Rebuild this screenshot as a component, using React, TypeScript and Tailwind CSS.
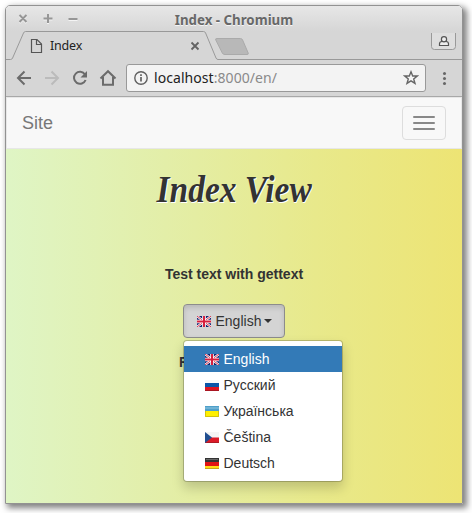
import React from "react";

type Code = "en" | "ru" | "uk" | "cs" | "de";

function Flag({ code }: { code: Code }) {
  return (
    <svg width="14" height="11" viewBox="0 0 14 11" className="block shrink-0">
      {code === "en" && (
        <>
          <rect width="14" height="11" fill="#16246f" />
          <path d="M0 0L14 11M14 0L0 11" stroke="#fff" strokeWidth="2.200" />
          <path d="M0 0L14 11M14 0L0 11" stroke="#d8304a" strokeWidth="1" />
          <path d="M7 0V11M0 5.5H14" stroke="#fff" strokeWidth="3.600" />
          <path d="M7 0V11M0 5.5H14" stroke="#d71f3d" strokeWidth="2" />
        </>
      )}
      {code === "ru" && (
        <>
          <rect width="14" height="11" fill="#f9f9f9" />
          <rect y="3" width="14" height="4" fill="#0b55a8" />
          <rect y="7" width="14" height="4" fill="#dd1420" />
          <path d="M0 10.5H14" stroke="#a91622" />
        </>
      )}
      {code === "uk" && (
        <>
          <rect width="14" height="11" fill="#fff000" />
          <rect width="14" height="5" fill="#4f9fc9" />
          <rect y="1" width="14" height="2" fill="#70b3d5" />
          <path d="M.5 5V10.5H13.5V5" stroke="#d3c20d" fill="none" />
        </>
      )}
      {code === "cs" && (
        <>
          <rect width="14" height="11" fill="#f5f5f5" />
          <rect y="5.5" width="14" height="5.5" fill="#dc1b28" />
          <path d="M0 10.5H14" stroke="#ae1b24" />
          <path d="M0 0L7 5.5L0 11Z" fill="#224f91" />
        </>
      )}
      {code === "de" && (
        <>
          <rect width="14" height="11" fill="#ffdb16" />
          <rect width="14" height="4" fill="#333" />
          <path d="M1 1.5H13" stroke="#666" />
          <rect y="4" width="14" height="4" fill="#e01414" />
          <path d="M0 10.5H14" stroke="#c8a816" />
        </>
      )}
    </svg>
  );
}

const languages: { code: Code; name: string }[] = [
  { code: "en", name: "English" },
  { code: "ru", name: "Русский" },
  { code: "uk", name: "Українська" },
  { code: "cs", name: "Čeština" },
  { code: "de", name: "Deutsch" },
];

function TitleBar() {
  return (
    <div className="relative flex h-[25px] items-center justify-center bg-linear-to-b from-[#e7e7e7] to-[#d6d6d6]">
      <svg width="64" height="12" viewBox="0 0 64 12" className="absolute left-[12px] top-[7px]" fill="none" strokeWidth="2">
        <g stroke="#f4f4f4" transform="translate(0 1)">
          <path d="M1.5 2L8.5 9M8.5 2L1.5 9M25.5 5.5H34.5M30 1V10M50.5 6H59.5" />
        </g>
        <path stroke="#969696" d="M1.5 2L8.5 9M8.5 2L1.5 9M25.5 5.5H34.5M30 1V10M50.5 6H59.5" />
      </svg>
      <h1 className="pt-[3px] font-['Noto_Sans',sans-serif] text-[13.300px] leading-[20px] font-bold whitespace-nowrap text-[#686868] [text-shadow:0_1px_0_#f5f5f5]">
        Index - Chromium
      </h1>
    </div>
  );
}

function TabStrip() {
  return (
    <div className="relative h-[29px] bg-[#d6d6d6]">
      <svg width="456" height="29" viewBox="6 31 456 29" className="absolute left-0 top-0" fill="none">
        <path d="M6 59.5H10.5Q12 59.5 12.6 58L23.5 33Q24.2 31.5 25.5 31.5H203.5Q205 31.5 205.6 33L216 58Q216.700 59.5 218 59.5H462" stroke="#999" />
        <path d="M217 38.500H240.500Q242 38.500 242.600 40L248.200 53Q248.700 54.500 247 54.500H225Q223 54.500 222.300 53L215.800 40Q215 38.500 217 38.500Z" fill="#b8b8b8" stroke="#aaa" />
        <path d="M431.500 33V46.500Q431.500 49.500 434.500 49.500H452.500Q455.500 49.500 455.500 46.500V33" stroke="#999" fill="#dedede" />
        <path d="M439.500 45.500V43.800Q439.500 41.500 442 41.500H446Q448.500 41.500 448.500 43.800V45.500Z" stroke="#555" strokeWidth="1.200" fill="#eee" />
        <circle cx="444" cy="39.200" r="2.600" stroke="#555" strokeWidth="1.200" fill="#eee" />
        <path d="M31.500 39.500H37L41.500 44V52.500H31.500ZM36.500 39.500V44.500H41.500" stroke="#555" strokeWidth="1.200" />
        <path d="M191.500 42.500L198.500 49.500M198.500 42.500L191.500 49.500" stroke="#636363" strokeWidth="1.800" />
      </svg>
      <span className="relative block pt-[5px] pl-[44px] font-['Noto_Sans',sans-serif] text-[12.500px] leading-[20px] tracking-[-0.200px] text-[#222]">Index</span>
    </div>
  );
}

function Toolbar() {
  return (
    <div className="flex h-[37px] items-center border-b border-[#a8a8a8] bg-[#d6d6d6]">
      <svg width="120" height="36" viewBox="6 60 120 36" className="shrink-0" fill="none" strokeWidth="2">
        <path d="M31 78H18M24.500 71.500L18 78L24.500 84.500" stroke="#6b6b6b" />
        <path d="M45 78H58M51.500 71.500L58 78L51.500 84.500" stroke="#bbb" />
        <path d="M85 74.500A6 6 0 1 0 85.600 80" stroke="#6b6b6b" />
        <path d="M87 71V77.500H80.500Z" fill="#6b6b6b" />
        <path d="M100.500 78.500L108 71.200L115.500 78.500M103 77V84.800H113V77" stroke="#6b6b6b" />
      </svg>
      <div className="flex h-[28px] w-[300px] shrink-0 items-center rounded-[3px] border border-[#999] bg-[#f3f3f3]">
        <svg width="14" height="14" viewBox="0 0 14 14" className="ml-[7px]" fill="none" stroke="#606060">
          <circle cx="7" cy="7" r="6.200" strokeWidth="1.400" />
          <path d="M7 6V10.500M7 3.300V5" strokeWidth="1.700" />
        </svg>
        <span className="ml-[6px] font-['Noto_Sans',sans-serif] text-[14px] leading-[20px] tracking-[0.060px] whitespace-nowrap text-[#8a8a8a]">
          <span className="text-[#222]">localhost</span>:8000/en/
        </span>
        <svg width="16" height="16" viewBox="0 0 16 16" className="mr-[6px] ml-auto" fill="none" stroke="#666" strokeWidth="1.400">
          <path d="M8 1.800L9.700 6H14.200L10.700 8.900L12 13.400L8 10.800L4 13.400L5.300 8.900L1.800 6H6.300Z" />
        </svg>
      </div>
      <svg width="5" height="16" viewBox="0 0 5 16" className="ml-[16px]" fill="#666">
        <circle cx="2.500" cy="3.500" r="1.500" />
        <circle cx="2.500" cy="8.500" r="1.500" />
        <circle cx="2.500" cy="13.500" r="1.500" />
      </svg>
    </div>
  );
}

function Navbar() {
  return (
    <nav className="flex h-[52px] items-center justify-between border border-[#e7e7e7] bg-[#f8f8f8] pr-[15px] pl-[15px]">
      <span className="text-[18px] leading-[20px] text-[#777]">Site</span>
      <button className="flex h-[34px] w-[44px] flex-col items-center justify-center gap-[4px] rounded-[4px] border border-[#ddd]">
        <span className="h-[2px] w-[22px] rounded-[1px] bg-[#888]" />
        <span className="h-[2px] w-[22px] rounded-[1px] bg-[#888]" />
        <span className="h-[2px] w-[22px] rounded-[1px] bg-[#888]" />
      </button>
    </nav>
  );
}

export default function App() {
  return (
    <div className="h-[513px] w-[472px] overflow-hidden bg-white pt-[5px] pl-[5px] font-['Liberation_Sans',Arial,sans-serif] text-[14px] leading-[20px] text-[#333]">
      <div className="h-[499px] w-[458px] overflow-hidden rounded-t-[5px] border border-[#929292] shadow-[3px_3px_6px_1px_rgba(0,0,0,0.5)]">
        <TitleBar />
        <TabStrip />
        <Toolbar />
        <Navbar />
        <main className="flex h-[354px] flex-col items-center bg-[linear-gradient(to_right,#dff5c5,#e3eea8_35%,#e8e98b_68%,#ede474)]">
          <h2 className="mt-[18px] h-[44px] origin-center scale-x-[0.880] font-['Liberation_Serif',serif] text-[38px] leading-[44px] font-bold italic whitespace-nowrap text-[#333] [text-shadow:1px_1px_0_#fff]">
            Index View
          </h2>
          <p className="mt-[53px] font-bold">Test text with gettext</p>
          <div className="relative mt-[20px]">
            <button className="flex h-[34px] w-[102px] items-center rounded-[4px] border border-[#8c8c8c] bg-[#d4d4d4] pl-[13px] shadow-[inset_0_3px_5px_rgba(0,0,0,0.125)]">
              <Flag code="en" />
              <span className="ml-[4.500px]">English</span>
              <span className="ml-[2.500px] border-x-4 border-t-4 border-x-transparent border-t-[#333]" />
            </button>
            <ul className="absolute top-[36px] left-0 z-10 h-[142px] w-[160px] rounded-[4px] border border-black/20 bg-white bg-clip-padding py-[5px] shadow-[0_6px_12px_rgba(0,0,0,0.175)]">
              {languages.map(({ code, name }, i) => (
                <li key={code} className={`flex h-[26px] items-center pl-[21px] ${i === 0 ? "bg-[#337ab7] text-white" : "text-[#333]"}`}>
                  <Flag code={code} />
                  <span className="ml-[4.500px]">{name}</span>
                </li>
              ))}
            </ul>
          </div>
          <p className="mt-[14px] w-[110px] font-bold">F</p>
        </main>
      </div>
    </div>
  );
}
